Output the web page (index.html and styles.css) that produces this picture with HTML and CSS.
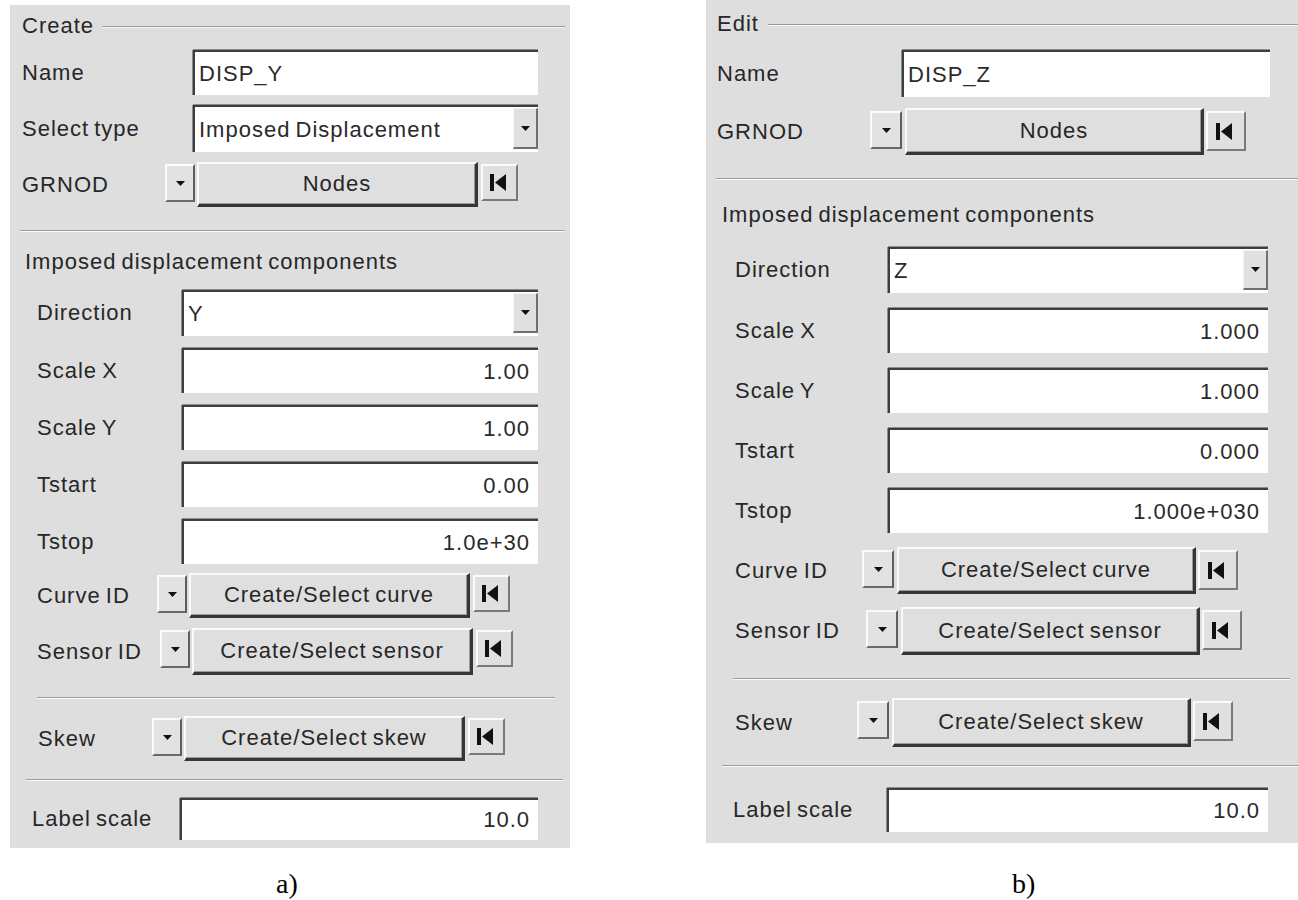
FILE: index.html
```html
<!DOCTYPE html>
<html>
<head>
<meta charset="utf-8">
<title>Imposed displacement</title>
<link rel="stylesheet" href="styles.css">
</head>
<body>
<div class="page">

  <section class="col col-a">
    <div class="panel panel-a">
      <div class="title"><span>Create</span><i class="rule"></i></div>

      <div class="row r-name"><span class="lbl">Name</span><div class="field"><span class="val">DISP_Y</span></div></div>
      <div class="row r-type"><span class="lbl">Select type</span><div class="field select"><span class="val">Imposed Displacement</span><span class="arrow-btn"><svg class="tri" width="9" height="5" viewBox="0 0 9 5"><polygon points="0,0 9,0 4.5,5"/></svg></span></div></div>
      <div class="row brow r-grnod"><span class="lbl">GRNOD</span><span class="dd"><svg class="tri" width="9" height="5" viewBox="0 0 9 5"><polygon points="0,0 9,0 4.5,5"/></svg></span><span class="btn">Nodes</span><span class="first"><svg width="16" height="17" viewBox="0 0 16 17"><rect x="0" y="0" width="4" height="17"/><polygon points="16,0 5,8.5 16,17"/></svg></span></div>

      <div class="sep s1"></div>

      <div class="row r-head"><span class="lbl">Imposed displacement components</span></div>
      <div class="row ind r-dir"><span class="lbl">Direction</span><div class="field select"><span class="val">Y</span><span class="arrow-btn"><svg class="tri" width="9" height="5" viewBox="0 0 9 5"><polygon points="0,0 9,0 4.5,5"/></svg></span></div></div>
      <div class="row ind r-val"><span class="lbl">Scale X</span><div class="field num"><span class="val">1.00</span></div></div>
      <div class="row ind r-val"><span class="lbl">Scale Y</span><div class="field num"><span class="val">1.00</span></div></div>
      <div class="row ind r-val"><span class="lbl">Tstart</span><div class="field num"><span class="val">0.00</span></div></div>
      <div class="row ind r-val"><span class="lbl">Tstop</span><div class="field num"><span class="val">1.0e+30</span></div></div>
      <div class="row brow ind r-curve"><span class="lbl">Curve ID</span><span class="dd"><svg class="tri" width="9" height="5" viewBox="0 0 9 5"><polygon points="0,0 9,0 4.5,5"/></svg></span><span class="btn">Create/Select curve</span><span class="first"><svg width="16" height="17" viewBox="0 0 16 17"><rect x="0" y="0" width="4" height="17"/><polygon points="16,0 5,8.5 16,17"/></svg></span></div>
      <div class="row brow ind r-sensor"><span class="lbl">Sensor ID</span><span class="dd"><svg class="tri" width="9" height="5" viewBox="0 0 9 5"><polygon points="0,0 9,0 4.5,5"/></svg></span><span class="btn">Create/Select sensor</span><span class="first"><svg width="16" height="17" viewBox="0 0 16 17"><rect x="0" y="0" width="4" height="17"/><polygon points="16,0 5,8.5 16,17"/></svg></span></div>

      <div class="sep s2"></div>

      <div class="row brow ind r-skew"><span class="lbl">Skew</span><span class="dd"><svg class="tri" width="9" height="5" viewBox="0 0 9 5"><polygon points="0,0 9,0 4.5,5"/></svg></span><span class="btn">Create/Select skew</span><span class="first"><svg width="16" height="17" viewBox="0 0 16 17"><rect x="0" y="0" width="4" height="17"/><polygon points="16,0 5,8.5 16,17"/></svg></span></div>

      <div class="sep s3"></div>

      <div class="row r-lscale"><span class="lbl">Label scale</span><div class="field num"><span class="val">10.0</span></div></div>
    </div>
    <div class="caption">a)</div>
  </section>

  <section class="col col-b">
    <div class="panel panel-b">
      <div class="title"><span>Edit</span><i class="rule"></i></div>

      <div class="row r-name"><span class="lbl">Name</span><div class="field"><span class="val">DISP_Z</span></div></div>
      <div class="row brow r-grnod"><span class="lbl">GRNOD</span><span class="dd"><svg class="tri" width="9" height="5" viewBox="0 0 9 5"><polygon points="0,0 9,0 4.5,5"/></svg></span><span class="btn">Nodes</span><span class="first"><svg width="16" height="17" viewBox="0 0 16 17"><rect x="0" y="0" width="4" height="17"/><polygon points="16,0 5,8.5 16,17"/></svg></span></div>

      <div class="sep s1"></div>

      <div class="row r-head"><span class="lbl">Imposed displacement components</span></div>
      <div class="row ind r-dir"><span class="lbl">Direction</span><div class="field select"><span class="val">Z</span><span class="arrow-btn"><svg class="tri" width="9" height="5" viewBox="0 0 9 5"><polygon points="0,0 9,0 4.5,5"/></svg></span></div></div>
      <div class="row ind r-val"><span class="lbl">Scale X</span><div class="field num"><span class="val">1.000</span></div></div>
      <div class="row ind r-val"><span class="lbl">Scale Y</span><div class="field num"><span class="val">1.000</span></div></div>
      <div class="row ind r-val"><span class="lbl">Tstart</span><div class="field num"><span class="val">0.000</span></div></div>
      <div class="row ind r-val"><span class="lbl">Tstop</span><div class="field num"><span class="val">1.000e+030</span></div></div>
      <div class="row brow ind r-curve"><span class="lbl">Curve ID</span><span class="dd"><svg class="tri" width="9" height="5" viewBox="0 0 9 5"><polygon points="0,0 9,0 4.5,5"/></svg></span><span class="btn">Create/Select curve</span><span class="first"><svg width="16" height="17" viewBox="0 0 16 17"><rect x="0" y="0" width="4" height="17"/><polygon points="16,0 5,8.5 16,17"/></svg></span></div>
      <div class="row brow ind r-sensor"><span class="lbl">Sensor ID</span><span class="dd"><svg class="tri" width="9" height="5" viewBox="0 0 9 5"><polygon points="0,0 9,0 4.5,5"/></svg></span><span class="btn">Create/Select sensor</span><span class="first"><svg width="16" height="17" viewBox="0 0 16 17"><rect x="0" y="0" width="4" height="17"/><polygon points="16,0 5,8.5 16,17"/></svg></span></div>

      <div class="sep s2"></div>

      <div class="row brow ind r-skew"><span class="lbl">Skew</span><span class="dd"><svg class="tri" width="9" height="5" viewBox="0 0 9 5"><polygon points="0,0 9,0 4.5,5"/></svg></span><span class="btn">Create/Select skew</span><span class="first"><svg width="16" height="17" viewBox="0 0 16 17"><rect x="0" y="0" width="4" height="17"/><polygon points="16,0 5,8.5 16,17"/></svg></span></div>

      <div class="sep s3"></div>

      <div class="row r-lscale"><span class="lbl">Label scale</span><div class="field num"><span class="val">10.0</span></div></div>
    </div>
    <div class="caption">b)</div>
  </section>

</div>
</body>
</html>
```

FILE: styles.css
```css
* { box-sizing: border-box; }

html, body {
  margin: 0;
  padding: 0;
  background: #ffffff;
}

body {
  width: 1298px;
  height: 900px;
  overflow: hidden;
  font-family: "Liberation Sans", Arial, sans-serif;
}

.page {
  display: flex;
  align-items: flex-start;
}

.col {
  display: flex;
  flex-direction: column;
  flex: none;
}

.col-a { width: 560px; margin: 5px 0 0 10px; }
.col-b { width: 592px; margin: 0 0 0 136px; }

/* ---------- panel ---------- */
.panel {
  display: flex;
  flex-direction: column;
  height: 843px;
  background: #dedede;
  color: #272727;
  font-size: 22px;
  letter-spacing: 1px;
  word-spacing: -2px;
  line-height: 1;
}

.panel-a {
  --pad: 12px;
  --ind: 27px;
  --pr: 32px;
  --dd-w: 30px;
  --dd-h: 38px;
  --btn-w: 281px;
  --first-w: 37px;
  --first-h: 37px;
  --b-off: 2px;
  --gap1: 2px;
  --gap2: 3px;
}

.panel-b {
  --pad: 11px;
  --ind: 29px;
  --pr: 30px;
  --dd-w: 32px;
  --dd-h: 38px;
  --btn-w: 299px;
  --first-w: 40px;
  --first-h: 40px;
  --b-off: 3px;
  --gap1: 3px;
  --gap2: 2px;
}

/* ---------- group title ---------- */
.title {
  display: flex;
  align-items: center;
  height: 30px;
  padding-left: var(--pad);
  flex: none;
}

.title .rule {
  flex: 1;
  height: 2px;
  margin-top: 2px;
  border-top: 1px solid #9a9a9a;
  border-bottom: 1px solid #f7f7f7;
}

.panel-a .title { margin-top: 6px; }
.panel-a .title .rule { margin-left: 8px; margin-right: 5px; }
.panel-b .title { margin-top: 9px; }
.panel-b .title .rule { margin-left: 9px; margin-right: 0; }

/* ---------- rows ---------- */
.row {
  display: flex;
  align-items: center;
  flex: none;
  padding-left: var(--pad);
  padding-right: var(--pr);
  white-space: nowrap;
}

.row.ind { padding-left: var(--ind); }

.lbl { flex: none; }

.brow { align-items: flex-start; }
.brow .lbl { align-self: center; }

/* ---------- text field ---------- */
.field {
  flex: 1;
  height: 100%;
  display: flex;
  align-items: center;
  background: #ffffff;
  border-top: 2px solid #3e3e3e;
  border-left: 2px solid #3e3e3e;
  box-shadow: 0 -1px 0 #8c8c8c, -1px 0 0 #8c8c8c;
  padding: 0 8px 0 4px;
  color: #2a2a2a;
}

.field .val { flex: 1; }
.field.num .val { text-align: right; }
.field.select { padding-right: 0; }

.arrow-btn {
  flex: none;
  align-self: stretch;
  width: 25px;
  margin: 1px 0 3px;
  background: #e0e0e0;
  border-left: 1px solid #f4f4f4;
  border-top: 1px solid #f4f4f4;
  border-right: 2px solid #707070;
  border-bottom: 2px solid #707070;
  display: flex;
  align-items: center;
  justify-content: center;
}

.tri { display: block; fill: #111; }

/* ---------- buttons ---------- */
.dd {
  flex: none;
  width: var(--dd-w);
  height: var(--dd-h);
  margin-top: var(--b-off);
  background: #e2e2e2;
  border-top: 2px solid #fbfbfb;
  border-left: 2px solid #fbfbfb;
  border-right: 2px solid #5e5e5e;
  border-bottom: 2px solid #6a6a6a;
  display: flex;
  align-items: center;
  justify-content: center;
}

.btn {
  flex: none;
  width: var(--btn-w);
  height: 100%;
  margin-left: var(--gap1);
  background: #dfdfdf;
  border-top: 2px solid #fafafa;
  border-left: 2px solid #fafafa;
  border-right: 3px solid #363636;
  border-bottom: 3px solid #363636;
  box-shadow: inset -1px -1px 0 #9a9a9a;
  display: flex;
  align-items: center;
  justify-content: center;
}

.first {
  flex: none;
  width: var(--first-w);
  height: var(--first-h);
  margin-top: var(--b-off);
  margin-left: var(--gap2);
  background: #e0e0e0;
  border-top: 2px solid #fbfbfb;
  border-left: 2px solid #fbfbfb;
  border-right: 2px solid #7a7a7a;
  border-bottom: 2px solid #7a7a7a;
  display: flex;
  align-items: center;
  justify-content: center;
  padding-right: 4px;
}

.first svg { display: block; fill: #111; }

/* ---------- separators ---------- */
.sep {
  flex: none;
  height: 2px;
  border-top: 1px solid #9c9c9c;
  border-bottom: 1px solid #fafafa;
}

/* ---------- left panel geometry ---------- */
.panel-a .r-name { margin-top: 9px; height: 45px; }
.panel-a .r-type { margin-top: 10px; height: 47px; }
.panel-a .r-name .lbl,
.panel-a .r-type .lbl { width: 171px; }
.panel-a .r-grnod { margin-top: 10px; height: 45px; }
.panel-a .r-grnod .lbl { width: 143px; }
.panel-a .s1 { margin: 23px 5px 0 10px; }
.panel-a .r-head { margin-top: 15px; height: 30px; padding-left: 15px; }
.panel-a .r-dir { margin-top: 13px; height: 46px; }
.panel-a .r-dir .lbl,
.panel-a .r-val .lbl { width: 145px; }
.panel-a .r-val { margin-top: 12px; height: 45px; }
.panel-a .r-curve { margin-top: 9px; height: 45px; }
.panel-a .r-curve .lbl { width: 120px; }
.panel-a .r-sensor { margin-top: 10px; height: 47px; }
.panel-a .r-sensor .lbl { width: 123px; }
.panel-a .s2 { margin: 22px 15px 0 27px; }
.panel-a .r-skew { margin-top: 17px; height: 45px; padding-left: 28px; }
.panel-a .r-skew .lbl { width: 114px; }
.panel-a .s3 { margin: 18px 7px 0 16px; }
.panel-a .r-lscale { margin-top: 17px; height: 42px; padding-left: 22px; }
.panel-a .r-lscale .lbl { width: 148px; }

/* ---------- right panel geometry ---------- */
.panel-b .r-name { margin-top: 11px; height: 47px; padding-right: 28px; }
.panel-b .r-name .lbl { width: 185px; }
.panel-b .r-grnod { margin-top: 11px; height: 47px; }
.panel-b .r-grnod .lbl { width: 153px; }
.panel-b .s1 { margin: 23px 0 0 10px; }
.panel-b .r-head { margin-top: 20px; height: 30px; padding-left: 16px; }
.panel-b .r-dir { margin-top: 17px; height: 46px; }
.panel-b .r-dir .lbl,
.panel-b .r-val .lbl { width: 153px; }
.panel-b .r-val { margin-top: 15px; height: 45px; }
.panel-b .r-curve { margin-top: 14px; height: 47px; }
.panel-b .r-curve .lbl { width: 127px; }
.panel-b .r-sensor { margin-top: 13px; height: 48px; }
.panel-b .r-sensor .lbl { width: 131px; }
.panel-b .s2 { margin: 23px 8px 0 27px; }
.panel-b .r-skew { margin-top: 18px; height: 49px; }
.panel-b .r-skew .lbl { width: 122px; }
.panel-b .s3 { margin: 18px 0 0 16px; }
.panel-b .r-lscale { margin-top: 21px; height: 44px; padding-left: 27px; }
.panel-b .r-lscale .lbl { width: 154px; }

/* ---------- captions ---------- */
.caption {
  font-family: "Liberation Serif", "Times New Roman", serif;
  font-size: 28px;
  line-height: 32px;
  color: #000000;
}

.col-a .caption { margin-top: 20px; padding-left: 266px; }
.col-b .caption { margin-top: 25px; padding-left: 306px; }
```
